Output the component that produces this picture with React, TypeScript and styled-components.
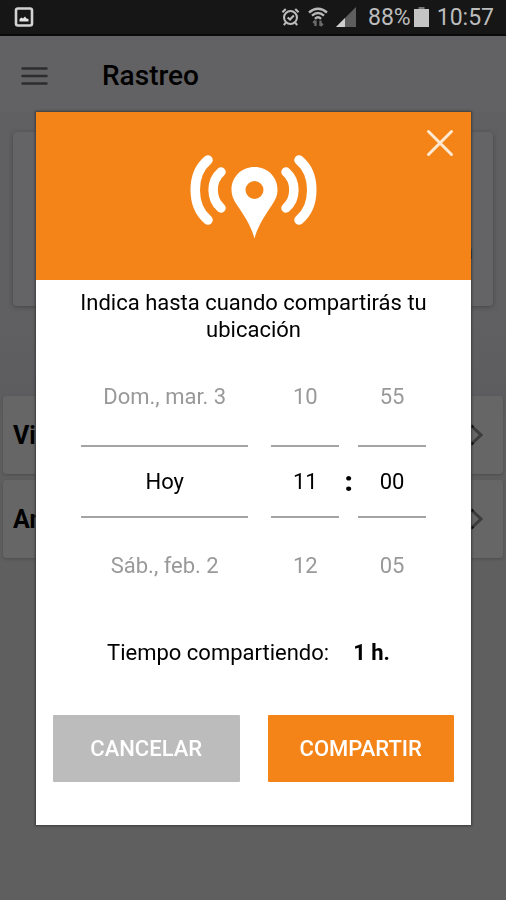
import React from "react";
import styled, { createGlobalStyle } from "styled-components";

const ORANGE = "#f48418";

const GlobalStyle = createGlobalStyle`
  *, *::before, *::after { box-sizing: border-box; }
  html, body, #root { height: 100%; }
  body {
    margin: 0;
    background: #5f5f5f;
    color: #000;
    font-family: Roboto, "Liberation Sans", sans-serif;
    font-size: 22px;
  }
  button, input { font: inherit; color: inherit; }
  h1, p { margin: 0; }
`;

const Screen = styled.div`
  display: flex;
  flex-direction: column;
  min-height: 100%;
`;

const StatusBar = styled.header`
  display: flex;
  align-items: center;
  justify-content: space-between;
  height: 36px;
  padding: 0 12px 0 14px;
  background: #161616;
  border-bottom: 2px solid #0a0a0a;
  color: #bcbcbc;
  font-size: 23px;
`;

const StatusGroup = styled.span<{ $gap: number }>`
  display: flex;
  align-items: center;
  gap: ${({ $gap }) => $gap}px;
`;

const AppBar = styled.div`
  display: flex;
  align-items: center;
  gap: 54px;
  height: 76px;
  padding: 4px 21px 0;
  background: #626264;
`;

const AppTitle = styled.h1`
  font-size: 28px;
  font-weight: 500;
  line-height: 32px;
`;

const IconButton = styled.button`
  display: flex;
  padding: 0;
  border: 0;
  background: none;
  cursor: pointer;
`;

const Content = styled.main`
  display: flex;
  flex-direction: column;
  gap: 90px;
  padding: 20px 0;
  background: linear-gradient(#606062 0, #606062 200px, #5d5d60 280px, #5f5f5f 310px);
`;

const SummaryCard = styled.section`
  display: flex;
  align-items: center;
  justify-content: flex-end;
  height: 174px;
  margin: 0 13px;
  padding: 64px 20px 0;
  border-radius: 4px;
  background: #646466;
  box-shadow: 0 1px 5px #454547;
  font-weight: 500;
`;

const List = styled.nav`
  display: flex;
  flex-direction: column;
  gap: 6px;
  padding: 0 3px;
`;

const ListRow = styled.a`
  display: flex;
  align-items: center;
  justify-content: space-between;
  height: 78px;
  padding: 0 20px 0 10px;
  border-radius: 3px;
  background: #666;
  box-shadow: 0 1px 3px #4c4c4c;
  color: #000;
  font-size: 25px;
  font-weight: 700;
  text-decoration: none;
`;

const Overlay = styled.div`
  position: fixed;
  inset: 0;
  display: flex;
  align-items: flex-start;
  padding: 112px 35px 0 36px;
`;

const Dialog = styled.section`
  flex: 1;
  background: #fff;
  box-shadow: 0 0 2px 1px #3c3c3c;
`;

const DialogHeader = styled.div`
  position: relative;
  display: flex;
  justify-content: center;
  height: 168px;
  padding-top: 42px;
  background: ${ORANGE};
`;

const CloseButton = styled(IconButton)`
  position: absolute;
  top: 17px;
  right: 17px;
`;

const DialogBody = styled.div`
  display: flex;
  flex-direction: column;
  padding: 9px 17px 43px;
`;

const Prompt = styled.p`
  padding: 0 24px;
  line-height: 27px;
  text-align: center;
`;

const Pickers = styled.div`
  display: grid;
  grid-template-columns: 168fr 23px 68fr 19px 68fr;
  margin: 18px 28px 0;
`;

const Wheel = styled.div`
  display: flex;
  flex-direction: column;
`;

const WheelStep = styled.button<{ $before?: boolean }>`
  height: 84px;
  padding: ${({ $before }) => ($before ? "0 0 12px" : "12px 0 0")};
  border: 0;
  background: none;
  color: #999;
  line-height: 26px;
  white-space: nowrap;
  cursor: pointer;
`;

const WheelValue = styled.input`
  width: 100%;
  min-width: 0;
  height: 73px;
  padding: 0;
  border: solid #a4a4a4;
  border-width: 2px 0;
  border-radius: 0;
  background: none;
  text-align: center;
`;

const Separator = styled.span`
  align-self: center;
  font-size: 28px;
  font-weight: 900;
  text-align: center;
`;

const Duration = styled.p`
  display: flex;
  justify-content: center;
  gap: 24px;
  padding-right: 10px;
  margin-top: 37px;
  line-height: 28px;
`;

const Actions = styled.div`
  display: flex;
  gap: 28px;
  margin-top: 48px;
`;

const ActionButton = styled.button<{ $primary?: boolean }>`
  flex: 1;
  height: 67px;
  padding: 0;
  border: 0;
  border-radius: 1px;
  background: ${({ $primary }) => ($primary ? ORANGE : "#bcbcbc")};
  color: #fff;
  font-weight: 500;
  cursor: pointer;
`;

const PictureIcon = () => (
  <svg width="20" height="20" viewBox="0 0 20 20" aria-hidden="true">
    <rect x="2" y="1.500" width="16" height="17" rx="2" fill="none" stroke="#d2d2d2" strokeWidth="2.600" />
    <path d="M5.500 14.500V12l2-1.500 1.500 1 2-2 1.500 2 2 .5v2.500z" fill="#e4e4e4" />
  </svg>
);

const AlarmIcon = () => (
  <svg width="19" height="20" viewBox="0 0 20 20" fill="none" stroke="#bcbcbc" strokeWidth="2.200" aria-hidden="true">
    <circle cx="10" cy="10.500" r="6.800" />
    <path d="M7 10.500l2.500 2.200 4-4.200M1.500 5l3.500-3.500M18.500 5L15 1.500M5 16l-2 2.500M15 16l2 2.500" />
  </svg>
);

const WifiIcon = () => (
  <svg width="20" height="20" viewBox="0 0 20 20" fill="none" aria-hidden="true">
    <g stroke="#b8b8b8" strokeWidth="2.400">
      <path d="M1 5.500Q10-2 19 5.500M4 8.700Q10 3.300 16 8.700M7 11.800Q10 8.800 13 11.800" />
    </g>
    <path d="M7.500 19v-5.500M5.300 16l2.200-2.500M12.500 13.500V19M14.700 16.500L12.500 19" stroke="#6a6a6a" strokeWidth="2.400" />
  </svg>
);

const SignalIcon = () => (
  <svg width="20" height="20" viewBox="0 0 20 20" aria-hidden="true">
    <path d="M20 0v20H0z" fill="#5e5e5e" />
    <path d="M9 11v9H0z" fill="#cfcfcf" />
  </svg>
);

const BatteryIcon = () => (
  <svg width="15" height="22" viewBox="0 0 15 22" aria-hidden="true">
    <path d="M4.500 1h6v3h-6z" fill="#777" />
    <path d="M0 3h15v18H0z" fill="#c4c4c4" />
  </svg>
);

const MenuIcon = () => (
  <svg width="27" height="20" viewBox="0 0 27 20" stroke="#2c2c2c" strokeWidth="2.400" strokeLinecap="round" aria-hidden="true">
    <path d="M1.500 2.500h24M1.500 10h24M1.500 17.500h24" />
  </svg>
);

const ChevronIcon = () => (
  <svg width="14" height="22" viewBox="0 0 14 22" fill="none" aria-hidden="true">
    <path d="M2 1.500L12 11 2 20.500" stroke="#3c3c3c" strokeWidth="3" />
    <path d="M2 1.500l2 2M2 20.500l2-2" stroke="#000" strokeWidth="3" />
  </svg>
);

const CloseIcon = () => (
  <svg width="28" height="28" viewBox="0 0 28 28" stroke="#ffe9d2" strokeWidth="3" strokeLinecap="round" aria-hidden="true">
    <path d="M2.500 2.500l23 23M25.500 2.500l-23 23" />
  </svg>
);

const BroadcastPin = () => (
  <svg width="128" height="85" viewBox="0 0 128 85" fill="none" aria-hidden="true">
    <path
      d="M64.500 13C51.500 13 41.500 23 41.500 35.500C41.500 42 44 46.500 48 52.500C57 65.500 62 75 64.500 84.500C67 75 72 65.500 81 52.500C85 46.500 87.500 42 87.500 35.500C87.500 23 77.500 13 64.500 13ZM64.500 27A9 9 0 1 1 64.500 45A9 9 0 1 1 64.500 27Z"
      fill="#fff"
      fillRule="evenodd"
    />
    <g stroke="#fff" strokeWidth="9.500" strokeLinecap="round">
      <path d="M18 6C1 20 1 52 18 66" />
      <path d="M31 18C20.500 27 20.500 45 31 54" />
      <path d="M96 18C106.500 27 106.500 45 96 54" />
      <path d="M109 6C126 20 126 52 109 66" />
    </g>
  </svg>
);

type PickerProps = { label: string; previous: string; value: string; next: string };

const Picker = ({ label, previous, value, next }: PickerProps) => (
  <Wheel role="group" aria-label={label}>
    <WheelStep type="button" $before>
      {previous}
    </WheelStep>
    <WheelValue type="text" aria-label={label} defaultValue={value} />
    <WheelStep type="button">{next}</WheelStep>
  </Wheel>
);

export default function App() {
  return (
    <>
      <GlobalStyle />
      <Screen>
        <StatusBar>
          <PictureIcon />
          <StatusGroup $gap={12}>
            <StatusGroup $gap={8}>
              <AlarmIcon />
              <WifiIcon />
              <SignalIcon />
            </StatusGroup>
            <StatusGroup $gap={8}>
              <StatusGroup $gap={3}>
                <span>88%</span>
                <BatteryIcon />
              </StatusGroup>
              <span>10:57</span>
            </StatusGroup>
          </StatusGroup>
        </StatusBar>
        <AppBar>
          <IconButton type="button" aria-label="Menú">
            <MenuIcon />
          </IconButton>
          <AppTitle>Rastreo</AppTitle>
        </AppBar>
        <Content>
          <SummaryCard>n</SummaryCard>
          <List>
            <ListRow href="#vi">
              Vi
              <ChevronIcon />
            </ListRow>
            <ListRow href="#an">
              An
              <ChevronIcon />
            </ListRow>
          </List>
        </Content>
      </Screen>
      <Overlay>
        <Dialog role="dialog" aria-modal="true" aria-labelledby="share-prompt">
          <DialogHeader>
            <BroadcastPin />
            <CloseButton type="button" aria-label="Cerrar">
              <CloseIcon />
            </CloseButton>
          </DialogHeader>
          <DialogBody>
            <Prompt id="share-prompt">Indica hasta cuando compartirás tu ubicación</Prompt>
            <Pickers>
              <Picker label="Día" previous="Dom., mar. 3" value="Hoy" next="Sáb., feb. 2" />
              <span />
              <Picker label="Hora" previous="10" value="11" next="12" />
              <Separator>:</Separator>
              <Picker label="Minutos" previous="55" value="00" next="05" />
            </Pickers>
            <Duration>
              <span>Tiempo compartiendo:</span>
              <strong>1 h.</strong>
            </Duration>
            <Actions>
              <ActionButton type="button">CANCELAR</ActionButton>
              <ActionButton type="button" $primary>
                COMPARTIR
              </ActionButton>
            </Actions>
          </DialogBody>
        </Dialog>
      </Overlay>
    </>
  );
}
